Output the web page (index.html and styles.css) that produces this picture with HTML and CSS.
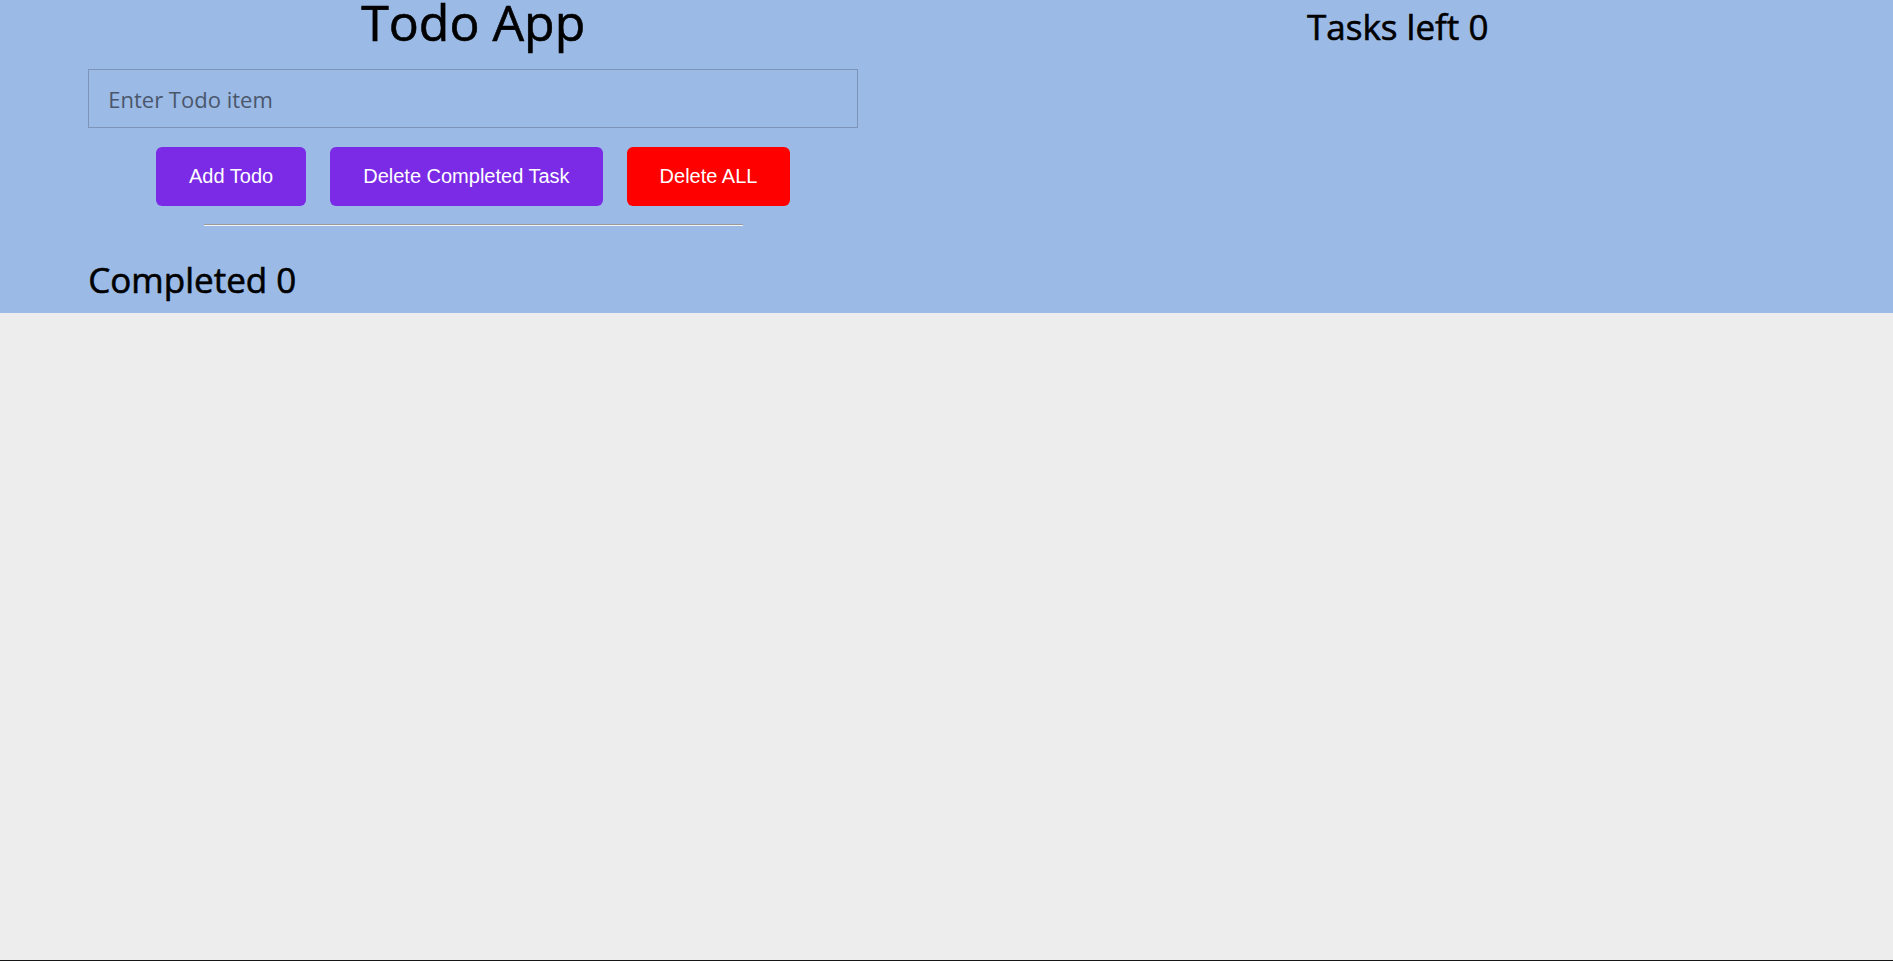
FILE: index.html
```html
<!DOCTYPE html>
<html lang="en">
<head>
<meta charset="utf-8">
<title>Todo App</title>
<link rel="stylesheet" href="styles.css">
</head>
<body>
<header class="top">
  <section class="main-col">
    <div class="inner">
      <h1 class="title">Todo App</h1>
      <input class="todo-input" type="text" placeholder="Enter Todo item">
      <div class="actions">
        <button class="btn btn-purple">Add Todo</button>
        <button class="btn btn-purple">Delete Completed Task</button>
        <button class="btn btn-red">Delete ALL</button>
      </div>
      <hr class="divider">
      <h2 class="completed">Completed 0</h2>
    </div>
  </section>
  <aside class="side-col">
    <h2 class="tasks-left">Tasks left 0</h2>
  </aside>
</header>
<main class="content"></main>
</body>
</html>
```

FILE: styles.css
```css
html, body {
  margin: 0;
  padding: 0;
}

body {
  background: #ededed;
  font-family: "Open Sans", "Noto Sans", sans-serif;
  color: #000;
}

.top {
  display: grid;
  grid-template-columns: 1fr 1fr;
  background: #9bbae6;
  height: 313px;
  box-sizing: border-box;
}

.main-col {
  display: flex;
  justify-content: center;
}

.inner {
  width: 770px;
  display: flex;
  flex-direction: column;
}

.title {
  margin: 0;
  font-size: 50px;
  line-height: 45px;
  font-weight: 400;
  -webkit-text-stroke: 0.6px #000;
  text-align: center;
}

.todo-input {
  margin-top: 24px;
  height: 59px;
  box-sizing: border-box;
  border: 1px solid #7d94b8;
  background: transparent;
  padding: 0 0 0 19px;
  font-family: "Open Sans", "Noto Sans", sans-serif;
  font-size: 22px;
  color: #222;
  outline: none;
}

.todo-input::placeholder {
  color: #4a576b;
}

.actions {
  margin-top: 19px;
  display: flex;
  justify-content: center;
  gap: 24px;
}

.btn {
  height: 59px;
  padding: 0 33px;
  border: none;
  border-radius: 6px;
  color: #fff;
  font-family: "Liberation Sans", Arial, sans-serif;
  font-size: 20px;
  cursor: pointer;
}

.btn-purple {
  background: #7b2ae6;
}

.btn-red {
  background: #ff0000;
}

.divider {
  width: 70%;
  margin: 18px auto 0;
  height: 0;
  border: none;
  border-top: 1px solid #9a9a9a;
  border-bottom: 1px solid #f2f2f2;
}

.completed {
  margin: 31px 0 0;
  font-size: 35px;
  line-height: 45px;
  font-weight: 400;
  -webkit-text-stroke: 0.6px #000;
}

.side-col {
  display: flex;
  justify-content: center;
  padding-right: 44px;
}

.tasks-left {
  margin: 0;
  padding-top: 4px;
  font-size: 35px;
  line-height: 45px;
  font-weight: 400;
  -webkit-text-stroke: 0.6px #000;
}

.content {
  height: 647px;
  border-bottom: 1px solid #161616;
}
```
